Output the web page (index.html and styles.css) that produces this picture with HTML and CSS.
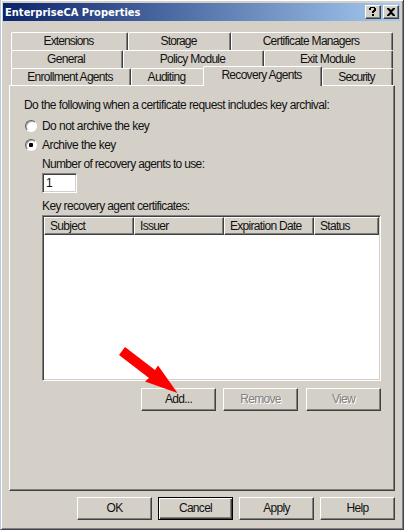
FILE: index.html
```
<!DOCTYPE html>
<html lang="en">
<head>
<meta charset="utf-8">
<title>EnterpriseCA Properties</title>
<link rel="stylesheet" href="styles.css">
</head>
<body>
<div class="window">
  <header class="titlebar">
    <h1>EnterpriseCA Properties</h1>
    <button class="cap" aria-label="Context help"><svg width="14" height="12" viewBox="0 0 14 12"><path d="M3 4V2h1V1h5v1h1v3H9v1H8v1H6V5h1V4h1V2H5v2zM6 8h2v2H6z"/></svg></button>
    <button class="cap close" aria-label="Close"><svg width="14" height="12" viewBox="0 0 14 12"><path d="M3 2h2l2 2 2-2h2v1L8 6l3 3v1H9L7 8l-2 2H3V9l3-3-3-3z"/></svg></button>
  </header>
  <nav class="tabs">
    <div class="row r1"><span class="tab tight">Extensions</span><span class="tab tight">Storage</span><span class="tab">Certificate Managers</span></div>
    <div class="row r2"><span class="tab">General</span><span class="tab">Policy Module</span><span class="tab">Exit Module</span></div>
    <div class="row r3"><span class="tab">Enrollment Agents</span><span class="tab joined">Auditing</span><span class="tab active">Recovery Agents</span><span class="tab tight">Security</span></div>
  </nav>
  <main class="page">
    <p class="intro">Do the following when a certificate request includes key archival:</p>
    <div class="option first"><i class="radio"></i><span>Do not archive the key</span></div>
    <div class="option"><i class="radio on"></i><span>Archive the key</span></div>
    <section class="details">
      <p class="number">Number of recovery agents to use:</p>
      <div class="field">1</div>
      <p class="certs">Key recovery agent certificates:</p>
      <div class="list">
        <div class="head"><span>Subject</span><span>Issuer</span><span>Expiration Date</span><span>Status</span></div>
      </div>
      <div class="actions"><button class="btn">Add...</button><button class="btn" disabled>Remove</button><button class="btn view" disabled>View</button></div>
    </section>
  </main>
  <footer class="buttons"><button class="btn">OK</button><button class="btn default">Cancel</button><button class="btn">Apply</button><button class="btn">Help</button></footer>
</div>
<svg class="arrow" width="64" height="52" viewBox="116 344 64 52"><path d="M125 347L155 370L158 365.5L177.500 393L145 381.500L149 378L119 355Z"/></svg>
</body>
</html>
```
FILE: styles.css
```
* { box-sizing: border-box; }
body { margin: 0; width: 404px; height: 530px; overflow: hidden; background: #d4d0c8; color: #111; font: 12px/14px "Liberation Sans", Arial, sans-serif; letter-spacing: -0.7px; }
p, h1 { margin: 0; white-space: nowrap; }
.window { width: 404px; height: 530px; padding: 3px 0 0 2px; border-left: 1px solid #b5cbdd; border-right: 1px solid #3c4250; border-bottom: 1px solid #3c4250; background: #d4d0c8; box-shadow: inset 1px 1px #fff, inset -1px -1px #808080; }
.titlebar { display: flex; height: 18px; width: 397px; align-items: center; padding-right: 1px; background: linear-gradient(90deg, #0a246a, #a6caf0); }
h1 { flex: 1; padding: 1px 0 0 2px; color: #fff; font: bold 11px/18px "DejaVu Sans Condensed", "DejaVu Sans", sans-serif; letter-spacing: 0.03px; }
.cap { width: 16px; height: 14px; padding: 0; border: 1px solid; border-color: #fff #404040 #404040 #fff; background: #d4d0c8; box-shadow: inset -1px -1px #808080; }
.cap svg { display: block; }
.close { margin-left: 2px; }
.tabs { padding: 11px 0 0 8px; }
.row { display: grid; width: 382px; height: 18px; }
.r1 { grid-template-columns: 117px 103px 162px; }
.r2 { grid-template-columns: 112px 141px 129px; }
.r3 { grid-template-columns: 120px 72px 119px 71px; height: 17px; }
.tab { height: 18px; padding-right: 2px; border: 1px solid; border-color: #fff #404040 transparent #fff; border-bottom: 0; border-radius: 2px 2px 0 0; box-shadow: inset -1px 0 #808080; text-align: center; line-height: 17px; white-space: nowrap; }
.tight { letter-spacing: -0.88px; }
.r3 .tab { height: 17px; }
.r3 .joined { border-right: 0; box-shadow: none; }
.r3 .active { position: relative; height: 20px; margin-top: -2px; background: #d4d0c8; }
.page { width: 386px; height: 406px; margin-left: 6px; padding: 12px 0 0 14px; border: 1px solid; border-color: #fff #404040 #404040 #fff; box-shadow: inset -1px -1px #808080; }
.intro { letter-spacing: -0.57px; }
.option { display: flex; height: 19px; align-items: center; letter-spacing: -0.55px; }
.first { margin-top: 4px; }
.radio { width: 12px; height: 12px; margin: 0 5px 0 1px; border: 1px solid; border-color: #606060 #fff #fff #606060; border-radius: 50%; background: #fff; box-shadow: inset 1px 1px #a8a8a8; }
.on { background: radial-gradient(circle at 5px 5px, #000 2px, #fff 2.5px); }
.details { padding-left: 18px; }
.number { height: 18px; padding-top: 3px; letter-spacing: -0.66px; }
.field { width: 35px; height: 20px; margin-top: 1px; padding: 1px 3px; border: 1px solid; border-color: #808080 #fff #fff #808080; box-shadow: inset 1px 1px #404040, inset -1px -1px #d4d0c8; background: #fff; line-height: 17px; }
.certs { height: 22px; padding-top: 6px; letter-spacing: -0.62px; }
.list { width: 339px; height: 166px; padding: 1px; border: 1px solid; border-color: #808080 #fff #fff #808080; background: #fff; box-shadow: inset 1px 1px #404040, inset -1px -1px #d4d0c8; }
.head { display: grid; grid-template-columns: 90px 90px 90px 65px; height: 17px; }
.head span { padding-left: 5px; border: 1px solid; border-color: #fff #404040 #404040 #fff; background: #d4d0c8; box-shadow: inset -1px -1px #808080; line-height: 16px; white-space: nowrap; }
.actions { display: flex; gap: 7px; margin: 7px 0 0 99px; }
.btn { width: 75px; height: 23px; padding: 0 0 1px; border: 1px solid; border-color: #fff #404040 #404040 #fff; background: #d4d0c8; box-shadow: inset -1px -1px #808080; color: #111; font: inherit; letter-spacing: inherit; line-height: 20px; }
.view { margin-left: 1px; }
.btn:disabled { color: #808080; text-shadow: 1px 1px #fff; }
.buttons { display: flex; gap: 6px; margin: 6px 0 0 74px; }
.default { border-color: #000; box-shadow: inset 1px 1px #fff, inset -1px -1px #404040, inset -2px -2px #808080; }
.arrow { position: absolute; left: 116px; top: 344px; fill: #f00; }
```
